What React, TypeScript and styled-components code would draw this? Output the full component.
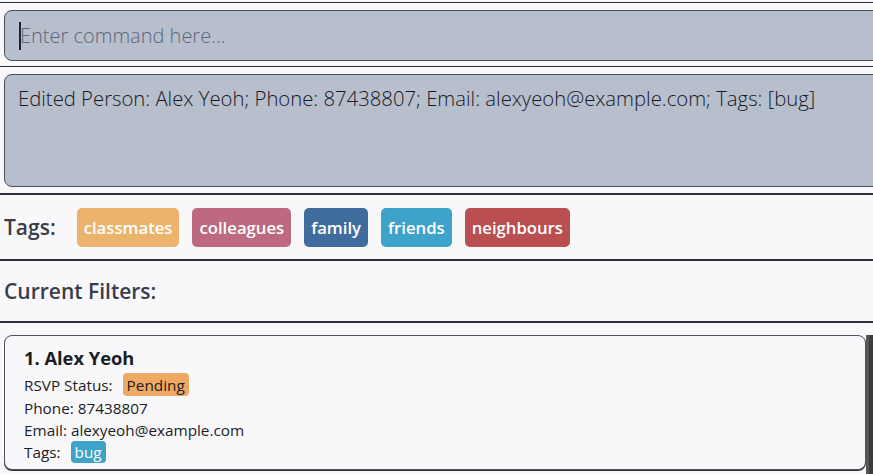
import React from "react";
import styled, { createGlobalStyle } from "styled-components";

const GlobalStyle = createGlobalStyle`
  html, body { margin: 0; padding: 0; background: #f8f8fb; overflow: hidden; }
  * { box-sizing: border-box; }
`;

const FONT = `"Open Sans", "Noto Sans", sans-serif`;
const RULE = "#2b2f39";

const Page = styled.div`
  width: 873px;
  height: 474px;
  overflow: hidden;
  padding-top: 2px;
  display: flex;
  flex-direction: column;
  background: #f8f8fb;
  font-family: ${FONT};
`;

const Section = styled.section<{ $rule: number; $pt?: number; $pb?: number; $h?: number }>`
  border-top: ${(p) => p.$rule}px solid ${RULE};
  padding: ${(p) => p.$pt ?? 0}px 0 ${(p) => p.$pb ?? 0}px 4px;
  ${(p) => (p.$h ? `height: ${p.$h}px;` : "")}
  flex-shrink: 0;
`;

const Box = styled.div<{ $h: number }>`
  width: 880px;
  height: ${(p) => p.$h}px;
  background: #b7bfcc;
  border: 1px solid #4a4f5a;
  border-radius: 8px;
`;

const CommandRow = styled.div`
  height: 100%;
  display: flex;
  align-items: center;
  padding-left: 14px;
`;

const Caret = styled.span`
  width: 2px;
  height: 28px;
  background: #1d2330;
  flex-shrink: 0;
`;

const CommandInput = styled.input`
  flex: 1;
  border: none;
  outline: none;
  background: transparent;
  font-family: ${FONT};
  font-weight: 300;
  font-size: 20px;
  color: #1d2330;
  padding: 0;
  margin-left: -1px;
  &::placeholder { color: #5b6880; }
`;

const ResultText = styled.div`
  padding: 9px 0 0 13px;
  font-weight: 300;
  font-size: 20.3px;
  color: #161a28;
  white-space: nowrap;
`;

const Row = styled.div`
  height: 100%;
  display: flex;
  align-items: center;
`;

const Heading = styled.h2`
  margin: 0;
  font-family: ${FONT};
  font-weight: 600;
  font-size: 21px;
  color: #3a3d49;
`;

const TagList = styled.div`
  display: flex;
  gap: 13px;
  margin-left: 21px;
`;

const TagChip = styled.span<{ $bg: string }>`
  height: 39px;
  padding: 0 7px;
  display: flex;
  align-items: center;
  border-radius: 5px;
  background: ${(p) => p.$bg};
  color: #ffffff;
  font-weight: 600;
  font-size: 16.7px;
`;

const ListArea = styled.div`
  flex: 1;
  display: flex;
  border-top: 2px solid ${RULE};
  padding-top: 12px;
`;

const ListColumn = styled.div`
  flex: 1;
  padding-left: 4px;
`;

const Scrollbar = styled.div`
  width: 8px;
  background: #3d3d3d;
  border-left: 3px solid #575757;
`;

const Card = styled.div`
  width: 862px;
  height: 135px;
  border: 1px solid #50545e;
  border-radius: 8px;
  background: #f8f8fb;
  padding: 9px 0 0 19px;
  box-shadow: 0 1px 0 #2f323a;
`;

const Name = styled.div`
  font-weight: 700;
  font-size: 18.3px;
  color: #1b1d24;
  height: 27px;
  line-height: 26px;
`;

const Field = styled.div<{ $h?: number }>`
  display: flex;
  align-items: center;
  height: ${(p) => p.$h ?? 22}px;
  font-size: 15.3px;
  color: #1b1d24;
`;

const Badge = styled.span<{ $bg: string; $fg: string; $h: number }>`
  margin-left: 10px;
  height: ${(p) => p.$h}px;
  padding: 0 4px;
  display: flex;
  align-items: center;
  border-radius: 4px;
  background: ${(p) => p.$bg};
  color: ${(p) => p.$fg};
  font-size: 15.3px;
`;

const tags = [
  { name: "classmates", color: "#ebb36b" },
  { name: "colleagues", color: "#bd6a80" },
  { name: "family", color: "#416c9e" },
  { name: "friends", color: "#3ea3c8" },
  { name: "neighbours", color: "#b94f51" },
];

export default function App() {
  return (
    <>
      <GlobalStyle />
      <Page>
        <Section $rule={1} $pt={7} $pb={5}>
          <Box $h={51}>
            <CommandRow>
              <Caret />
              <CommandInput placeholder="Enter command here..." />
            </CommandRow>
          </Box>
        </Section>
        <Section $rule={1} $pt={7} $pb={6}>
          <Box $h={113}>
            <ResultText>
              Edited Person: Alex Yeoh; Phone: 87438807; Email: alexyeoh@example.com; Tags: [bug]
            </ResultText>
          </Box>
        </Section>
        <Section $rule={2} $h={66}>
          <Row>
            <Heading>Tags:</Heading>
            <TagList>
              {tags.map((t) => (
                <TagChip key={t.name} $bg={t.color}>
                  {t.name}
                </TagChip>
              ))}
            </TagList>
          </Row>
        </Section>
        <Section $rule={2} $h={62}>
          <Row>
            <Heading>Current Filters:</Heading>
          </Row>
        </Section>
        <ListArea>
          <ListColumn>
            <Card>
              <Name>1. Alex Yeoh</Name>
              <Field $h={25}>
                RSVP Status:
                <Badge $bg="#eeaa62" $fg="#1b1d24" $h={23}>Pending</Badge>
              </Field>
              <Field>Phone: 87438807</Field>
              <Field>Email: alexyeoh@example.com</Field>
              <Field>
                Tags:
                <Badge $bg="#3ea3c8" $fg="#ffffff" $h={22}>bug</Badge>
              </Field>
            </Card>
          </ListColumn>
          <Scrollbar />
        </ListArea>
      </Page>
    </>
  );
}
